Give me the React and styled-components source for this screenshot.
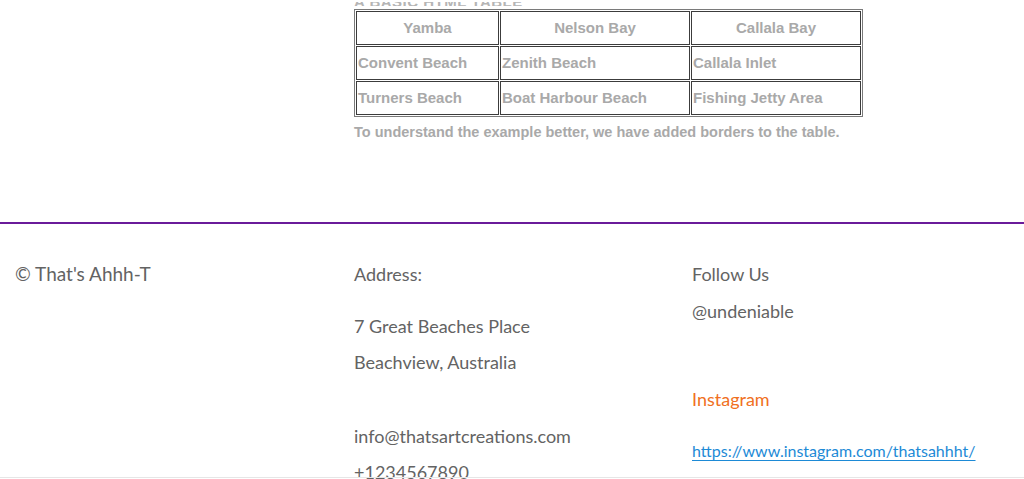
import React from "react";
import styled, { createGlobalStyle } from "styled-components";

const Global = createGlobalStyle`
  html, body { margin: 0; padding: 0; background: #fff; }
  body { overflow: hidden; }
`;

const Page = styled.div`
  width: 1024px;
  height: 479px;
  overflow: hidden;
`;

const TableSection = styled.section`
  display: flow-root;
  padding-left: 354px;
  height: 222px;
  font-family: "Liberation Sans", Arial, sans-serif;
  color: #a9a9a9;
`;

const Heading = styled.h2`
  margin: 2px 0 0;
  height: 4px;
  overflow: hidden;
  font-size: 15px;
  line-height: 15px;
  font-weight: bold;
  letter-spacing: 0.5px;
  color: #b5b5b5;
`;

const HeadingText = styled.span`
  display: block;
  margin-top: -8px;
`;

const Table = styled.table`
  margin-top: 3px;
  border: 1px solid #7a7a7a;
  border-spacing: 1px;
  table-layout: fixed;
  width: 509px;
`;

const Cell = styled.td`
  border: 1px solid #3c3c3c;
  padding: 7px 1px;
  font-size: 15px;
  line-height: 18px;
  font-weight: bold;
  color: #a9a9a9;
  text-align: ${(p) => (p.$head ? "center" : "left")};
  white-space: nowrap;
`;

const Note = styled.p`
  margin: 6px 0 0;
  font-size: 14.5px;
  line-height: 18px;
  font-weight: bold;
  color: #a9a9a9;
`;

const Footer = styled.footer`
  border-top: 2px solid #6a1b9a;
  display: grid;
  grid-template-columns: 339px 338px 1fr;
  padding: 32px 0 0 15px;
  font-family: Lato, "Open Sans", sans-serif;
  font-size: 18px;
  line-height: 36px;
  color: #636363;
`;

const Column = styled.div`
  display: flex;
  flex-direction: column;
  align-items: flex-start;
`;

const Line = styled.div`
  margin-top: ${(p) => p.$gap || 0}px;
  font-size: ${(p) => p.$size || 18}px;
  color: ${(p) => p.$color || "inherit"};
`;

const Link = styled.a`
  margin-top: ${(p) => p.$gap || 0}px;
  font-size: 16px;
  color: #1d8ad6;
  text-decoration: underline;
  text-underline-offset: 3px;
  text-decoration-thickness: 1px;
`;

const BottomBar = styled.div`
  position: fixed;
  left: 0;
  right: 0;
  bottom: 1px;
  height: 1px;
  background: #e6e6e6;
`;

const rows = [
  ["Convent Beach", "Zenith Beach", "Callala Inlet"],
  ["Turners Beach", "Boat Harbour Beach", "Fishing Jetty Area"],
];

export default function App() {
  return (
    <Page>
      <Global />
      <TableSection>
        <Heading>
          <HeadingText>A BASIC HTML TABLE</HeadingText>
        </Heading>
        <Table>
          <colgroup>
            <col style={{ width: 143 }} />
            <col style={{ width: 190 }} />
            <col style={{ width: 170 }} />
          </colgroup>
          <tbody>
            <tr>
              <Cell as="th" $head>Yamba</Cell>
              <Cell as="th" $head>Nelson Bay</Cell>
              <Cell as="th" $head>Callala Bay</Cell>
            </tr>
            {rows.map((r) => (
              <tr key={r[0]}>
                {r.map((c) => (
                  <Cell key={c}>{c}</Cell>
                ))}
              </tr>
            ))}
          </tbody>
        </Table>
        <Note>To understand the example better, we have added borders to the table.</Note>
      </TableSection>
      <Footer>
        <Column>
          <Line $size={19}>© That's Ahhh-T</Line>
        </Column>
        <Column>
          <Line>Address:</Line>
          <Line $gap={16}>7 Great Beaches Place</Line>
          <Line>Beachview, Australia</Line>
          <Line $gap={38}>info@thatsartcreations.com</Line>
          <Line>+1234567890</Line>
        </Column>
        <Column>
          <Line>Follow Us</Line>
          <Line $gap={1}>@undeniable</Line>
          <Line $gap={52} $color="#f07022">Instagram</Line>
          <Link $gap={16} href="#">https://www.instagram.com/thatsahhht/</Link>
        </Column>
      </Footer>
      <BottomBar />
    </Page>
  );
}
